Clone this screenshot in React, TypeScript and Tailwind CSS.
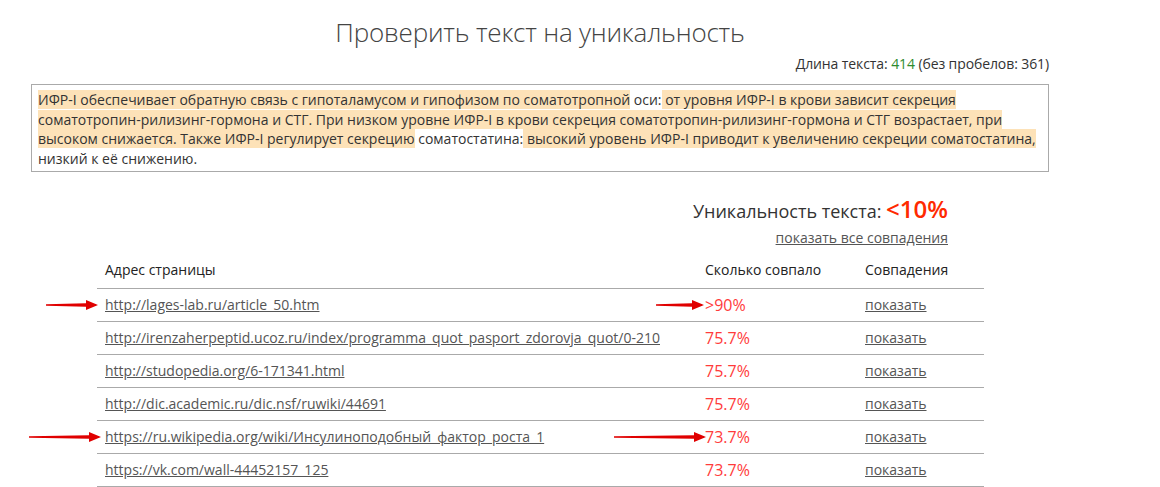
import React from "react";

const rows = [
  { url: "http://lages-lab.ru/article_50.htm", pct: ">90%", arrow: true },
  { url: "http://irenzaherpeptid.ucoz.ru/index/programma_quot_pasport_zdorovja_quot/0-210", pct: "75.7%" },
  { url: "http://studopedia.org/6-171341.html", pct: "75.7%" },
  { url: "http://dic.academic.ru/dic.nsf/ruwiki/44691", pct: "75.7%" },
  { url: "https://ru.wikipedia.org/wiki/Инсулиноподобный_фактор_роста_1", pct: "73.7%", arrow: true, long: true },
  { url: "https://vk.com/wall-44452157_125", pct: "73.7%" },
];

function Arrow({ w }: { w: number }) {
  return (
    <svg width={w} height="12" viewBox={`0 0 ${w} 12`} className="block">
      <polygon points={`0,5.3 ${w - 12},4.2 ${w - 12},1 ${w},6 ${w - 12},11 ${w - 12},7.8 0,6.7`} fill="#e00000" />
    </svg>
  );
}

const hl = "bg-[#fde2b8]";

export default function App() {
  return (
    <div className="h-[487px] w-[1160px] overflow-hidden bg-white text-[#333] [font-family:'Open_Sans',sans-serif]">
      <div className="ml-[31px] w-[1018px] pt-[14px]">
        <h1 className="text-center text-[26px] leading-[36px] font-light text-[#444] tracking-[-0.2px]">
          Проверить текст на уникальность
        </h1>
        <div className="mt-[5px] text-right text-[14px] leading-[18px] text-[#333] tracking-[-0.1px]">
          Длина текста: <span className="text-[#2e8b2e]">414</span> (без пробелов: 361)
        </div>
        <div className="mt-[11px] h-[88px] border border-[#aaa] px-[6px] pt-[5px] text-[14px] leading-[19.6px] text-[#333]">
          <span className={hl}>ИФР-I обеспечивает обратную связь с гипоталамусом и гипофизом по соматотропной</span> оси:
          <span className={hl}>
            {" "}от уровня ИФР-I в крови зависит секреция
            <br />
            соматотропин-рилизинг-гормона и СТГ. При низком уровне ИФР-I в крови секреция соматотропин-рилизинг-гормона и СТГ возрастает, при
            <br />
            высоком снижается. Также ИФР-I регулирует секрецию
          </span>{" "}
          соматостатина:
          <span className={hl}> высокий уровень ИФР-I приводит к увеличению секреции соматостатина,</span>
          <br />
          низкий к её снижению.
        </div>
      </div>

      <div className="ml-[97px] w-[887px]">
        <div className="mt-[23px] pr-[36px] text-right">
          <div className="text-[18px] leading-[28px] text-[#333]">
            Уникальность текста: <span className="text-[24px] font-semibold text-[#ff2a00]">&lt;10%</span>
          </div>
          <a className="text-[14px] leading-[18px] text-[#555] underline" href="#">
            показать все совпадения
          </a>
        </div>

        <table className="mt-[6px] w-full border-collapse text-[14px]">
          <thead>
            <tr className="h-[33px] border-b border-[#aaa] text-left text-[#222]">
              <th className="pl-[8px] pt-[4px] align-top font-normal">Адрес страницы</th>
              <th className="w-[160px] pl-[8px] pt-[4px] align-top font-normal">Сколько совпало</th>
              <th className="w-[127px] pl-[8px] pt-[4px] align-top font-normal">Совпадения</th>
            </tr>
          </thead>
          <tbody>
            {rows.map((r) => (
              <tr key={r.url} className="h-[33px] border-b border-[#aaa]">
                <td className="relative pl-[8px]">
                  {r.arrow && (
                    <span className={`absolute top-1/2 -translate-y-1/2 ${r.long ? "left-[-68px]" : "left-[-51px]"}`}>
                      <Arrow w={r.long ? 72 : 52} />
                    </span>
                  )}
                  <a href="#" className="text-[#555] underline">
                    {r.url}
                  </a>
                </td>
                <td className="relative pl-[8px] text-[16px] text-[#ff3b3b]">
                  {r.arrow && (
                    <span className={`absolute top-1/2 -translate-y-1/2 ${r.long ? "left-[-83px]" : "left-[-41px]"}`}>
                      <Arrow w={r.long ? 92 : 48} />
                    </span>
                  )}
                  {r.pct}
                </td>
                <td className="pl-[8px]">
                  <a href="#" className="text-[#555] underline">
                    показать
                  </a>
                </td>
              </tr>
            ))}
          </tbody>
        </table>
      </div>
    </div>
  );
}
